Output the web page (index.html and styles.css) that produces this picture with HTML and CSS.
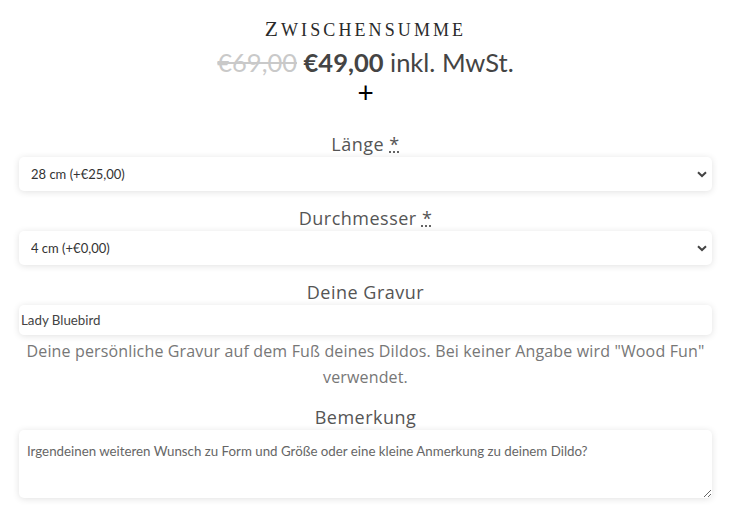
FILE: index.html
```html
<!DOCTYPE html>
<html lang="de">
<head>
<meta charset="utf-8">
<title>Zwischensumme</title>
<link rel="stylesheet" href="styles.css">
</head>
<body>
<div class="page">
  <div class="summary">
    <h3 class="summary-title"><span class="initial">Z</span>wischensumme</h3>
    <div class="summary-price"><del class="old">€69,00</del> <span class="new">€49,00</span> <span class="tax">inkl. MwSt.</span></div>
    <div class="plus">+</div>
  </div>

  <form class="options">
    <div class="field">
      <label class="field-label">Länge <abbr class="req" title="erforderlich">*</abbr></label>
      <div class="select-wrap">
        <select class="control select">
          <option>28 cm (+€25,00)</option>
        </select>
        <svg class="chev" width="10" height="7" viewBox="0 0 10 7"><path d="M1 1.2 L5 5 L9 1.2" fill="none" stroke="#444" stroke-width="2"/></svg>
      </div>
    </div>

    <div class="field">
      <label class="field-label">Durchmesser <abbr class="req" title="erforderlich">*</abbr></label>
      <div class="select-wrap">
        <select class="control select">
          <option>4 cm (+€0,00)</option>
        </select>
        <svg class="chev" width="10" height="7" viewBox="0 0 10 7"><path d="M1 1.2 L5 5 L9 1.2" fill="none" stroke="#444" stroke-width="2"/></svg>
      </div>
    </div>

    <div class="field">
      <label class="field-label">Deine Gravur</label>
      <input class="control text" type="text" value="Lady Bluebird">
      <p class="hint">Deine persönliche Gravur auf dem Fuß deines Dildos. Bei keiner Angabe wird "Wood Fun" verwendet.</p>
    </div>

    <div class="field">
      <label class="field-label">Bemerkung</label>
      <textarea class="control area" placeholder="Irgendeinen weiteren Wunsch zu Form und Größe oder eine kleine Anmerkung zu deinem Dildo?"></textarea>
    </div>
  </form>
</div>
</body>
</html>
```

FILE: styles.css
```css
html, body {
  margin: 0;
  padding: 0;
  background: #ffffff;
}

.page {
  margin: 0 18px 0 19px;
  font-family: "Open Sans", "Noto Sans", sans-serif;
  color: #555;
}

.summary {
  text-align: center;
  padding-top: 14px;
}

.summary-title {
  margin: 0;
  font-family: "Liberation Serif", "DejaVu Serif", serif;
  font-weight: normal;
  text-transform: uppercase;
  font-size: 18px;
  line-height: 30px;
  letter-spacing: 3.1px;
  color: #2a2a2a;
}

.initial {
  font-size: 21.5px;
}

.summary-price {
  font-family: Lato, "Liberation Sans", sans-serif;
  font-size: 25.5px;
  line-height: 34px;
  color: #444;
}

.old {
  color: #c9c9c9;
}

.new {
  font-weight: bold;
  color: #444;
}

.plus {
  font-family: Lato, "Liberation Sans", sans-serif;
  font-size: 28px;
  line-height: 26px;
  color: #000;
}

.options {
  margin-top: 26px;
}

.field {
  margin-bottom: 14px;
}

.field-label {
  display: block;
  text-align: center;
  font-size: 18px;
  line-height: 26px;
  letter-spacing: 0.5px;
  color: #555;
}

.req {
  text-decoration: underline dotted;
  color: #555;
}

.control {
  display: block;
  box-sizing: border-box;
  width: 100%;
  border: none;
  background: #fff;
  border-radius: 5px;
  box-shadow: 0 1px 7px rgba(0, 0, 0, 0.12);
  font-family: Lato, "Liberation Sans", sans-serif;
  color: #333;
  outline: none;
}

.select-wrap {
  position: relative;
}

.select {
  appearance: none;
  -webkit-appearance: none;
  height: 34px;
  padding: 0 30px 0 12px;
  font-size: 13px;
}

.chev {
  position: absolute;
  right: 5px;
  top: 14px;
  pointer-events: none;
}

.text {
  height: 30px;
  padding: 0 2px;
  font-size: 13.3px;
  color: #444;
}

.hint {
  margin: 3px 0 0;
  text-align: center;
  font-size: 16px;
  line-height: 26px;
  letter-spacing: 0.15px;
  color: #777;
}

.area {
  height: 68px;
  padding: 12px 8px;
  font-size: 13.3px;
  line-height: 18px;
  resize: vertical;
}

.area::placeholder {
  color: #666;
}
```
